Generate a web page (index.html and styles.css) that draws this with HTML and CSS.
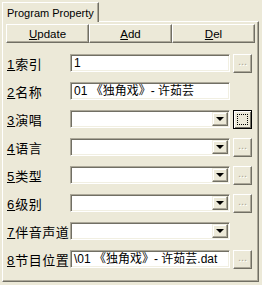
FILE: index.html
```html
<!DOCTYPE html>
<html lang="zh">
<head>
  <meta charset="UTF-8">
  <title>Program Property</title>
  <link rel="stylesheet" href="styles.css">
</head>
<body>
  <div class="tabbar">
    <div class="tab">Program Property</div>
  </div>
  <div class="panel">
    <div class="toolbar">
      <button class="btn"><u>U</u>pdate</button>
      <button class="btn"><u>A</u>dd</button>
      <button class="btn"><u>D</u>el</button>
    </div>

    <div class="fields">
      <div class="row">
        <label class="lbl"><u>1</u>索引</label>
        <div class="edit">1</div>
        <button class="more">...</button>
      </div>
      <div class="row">
        <label class="lbl"><u>2</u>名称</label>
        <div class="edit">01 《独角戏》- 许茹芸</div>
      </div>
      <div class="row">
        <label class="lbl"><u>3</u>演唱</label>
        <div class="edit combo"><span class="arrow"></span></div>
        <button class="more focused"><span class="focus-ring"></span></button>
      </div>
      <div class="row">
        <label class="lbl"><u>4</u>语言</label>
        <div class="edit combo"><span class="arrow"></span></div>
        <button class="more">...</button>
      </div>
      <div class="row">
        <label class="lbl"><u>5</u>类型</label>
        <div class="edit combo"><span class="arrow"></span></div>
        <button class="more">...</button>
      </div>
      <div class="row">
        <label class="lbl"><u>6</u>级别</label>
        <div class="edit combo"><span class="arrow"></span></div>
        <button class="more">...</button>
      </div>
      <div class="row">
        <label class="lbl"><u>7</u>伴音声道</label>
        <div class="edit combo"><span class="arrow"></span></div>
      </div>
      <div class="row">
        <label class="lbl"><u>8</u>节目位置</label>
        <div class="edit">\01 《独角戏》- 许茹芸.dat</div>
        <button class="more">...</button>
      </div>
    </div>
  </div>
</body>
</html>
```

FILE: styles.css
```css
* { box-sizing: border-box; }
body {
  margin: 0;
  width: 262px;
  height: 285px;
  background: #ece9d8;
  color: #000;
  font-family: 'Liberation Sans', 'Noto Sans CJK SC', sans-serif;
  font-size: 11px;
  overflow: hidden;
}
u {
  text-decoration: underline;
  text-underline-offset: 1px;
}

/* tab header */
.tabbar {
  padding: 2px 0 0 2px;
  height: 21px;
}
.tab {
  position: relative;
  z-index: 1;
  display: inline-block;
  height: 20px;
  padding: 3px 4px 0 4px;
  background: #ece9d8;
  border-top: 1px solid #fff;
  border-left: 1px solid #fff;
  border-right: 1px solid #716f64;
  box-shadow: inset -1px 0 #aca899;
  font-size: 11px;
  line-height: 14px;
}

/* panel */
.panel {
  margin-left: 2px;
  width: 257px;
  height: 261px;
  border: 1px solid;
  border-color: #fff #716f64 #716f64 #fff;
  box-shadow: inset -1px -1px #aca899;
}
.toolbar {
  display: grid;
  grid-template-columns: 1fr 1fr 1fr;
  margin: 2px 0 0 3px;
  width: 249px;
}
.btn {
  height: 19px;
  margin: 0;
  padding: 0;
  background: #ece9d8;
  border: 1px solid;
  border-color: #fff #716f64 #716f64 #fff;
  box-shadow: inset -1px -1px #aca899;
  font: inherit;
  font-size: 11.5px;
  color: #000;
}

/* rows */
.fields {
  margin-top: 6px;
  padding-left: 4px;
}
.row {
  display: flex;
  align-items: center;
  height: 28px;
}
.lbl {
  width: 63px;
  font-size: 13px;
  white-space: nowrap;
  letter-spacing: 0.5px;
}
.lbl u {
  letter-spacing: 1px;
}
.edit {
  position: relative;
  width: 160px;
  height: 18px;
  padding: 2px 0 0 3px;
  background: #fff;
  border: 1px solid;
  border-color: #aca899 #fff #fff #aca899;
  box-shadow: inset 1px 1px #716f64, inset -1px -1px #f1efe2;
  font-size: 12px;
  line-height: 13px;
  white-space: nowrap;
  overflow: hidden;
}
.arrow {
  position: absolute;
  right: 1px;
  top: 1px;
  width: 16px;
  height: 14px;
  background: #ece9d8;
  border: 1px solid;
  border-color: #f1efe2 #716f64 #716f64 #f1efe2;
  box-shadow: inset -1px -1px #aca899, inset 1px 1px #fff;
}
.arrow::after {
  content: '';
  position: absolute;
  left: 3px;
  top: 4px;
  border-left: 4px solid transparent;
  border-right: 4px solid transparent;
  border-top: 4px solid #000;
}
.more {
  position: relative;
  width: 19px;
  height: 19px;
  margin: 0 0 0 3px;
  padding: 0 0 3px;
  background: #ece9d8;
  border: 1px solid;
  border-color: #fff #716f64 #716f64 #fff;
  box-shadow: inset -1px -1px #aca899;
  font: inherit;
  font-size: 11px;
  line-height: 11px;
  color: #aca899;
  text-shadow: 1px 1px #fff;
}
.more.focused {
  border-color: #000;
  box-shadow: inset 1px 1px #fff, inset -1px -1px #716f64;
}
.focus-ring {
  position: absolute;
  left: 3px;
  top: 3px;
  right: 3px;
  bottom: 3px;
  border: 1px dotted #000;
}
```
